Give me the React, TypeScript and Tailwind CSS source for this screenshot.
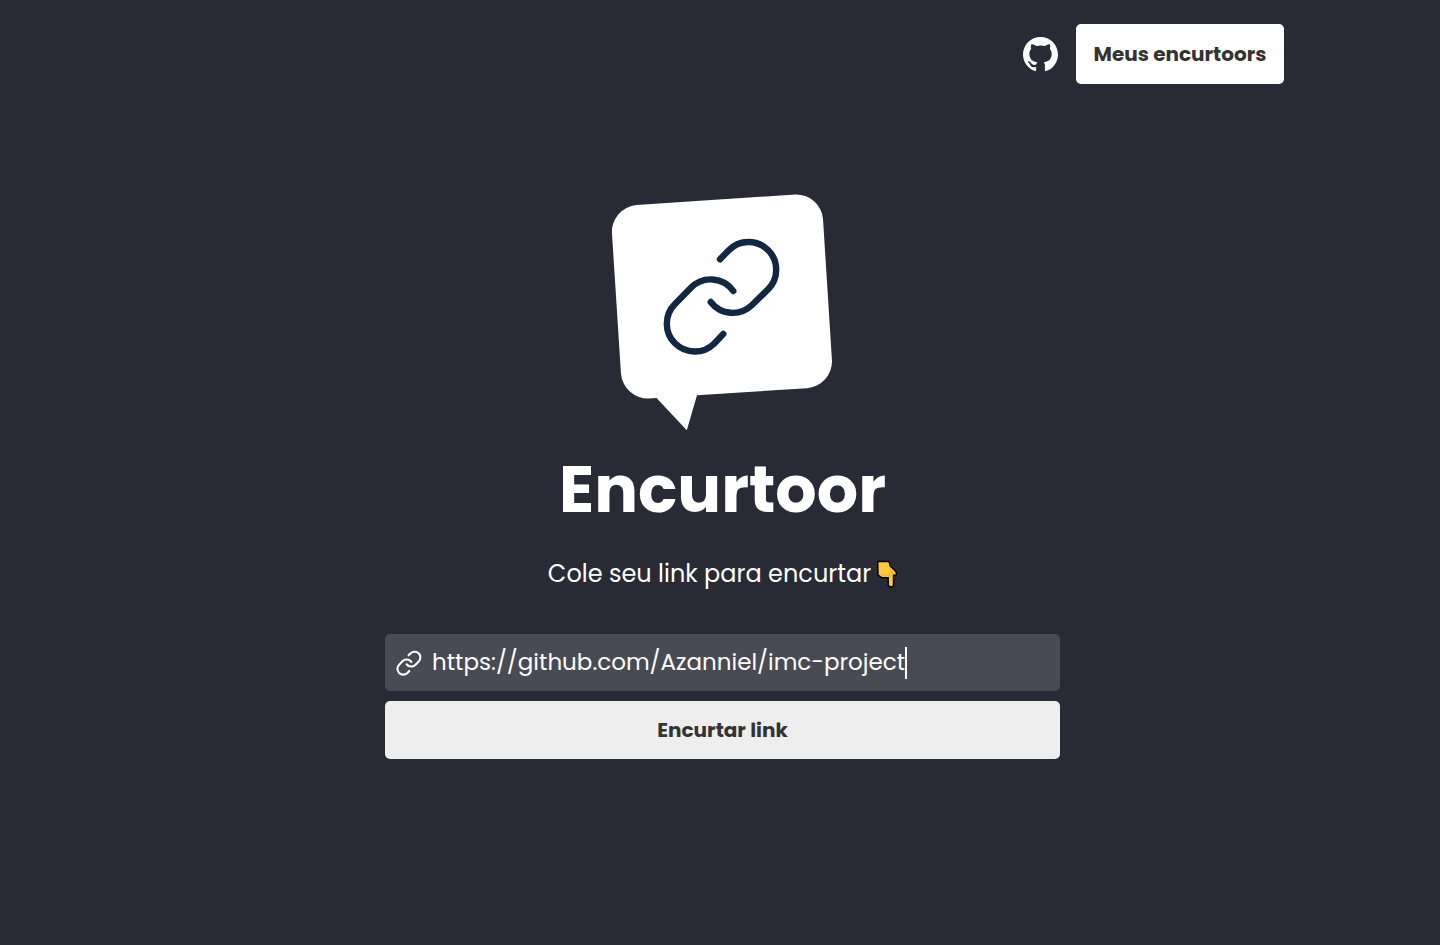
import { useState } from "react";
import { BsGithub } from "react-icons/bs";

function ChainPaths() {
  return (
    <>
      <path d="M720 259.3 728.8 250.2A27.7 27.7 0 0 1 768.2 289.2L752 305A27.7 27.7 0 0 1 710.7 302" />
      <path d="M733.3 291A27.7 27.7 0 0 0 690.7 288L675 304A27.7 27.7 0 0 0 714.3 343.4L723.3 334" />
    </>
  );
}

function BubbleLogo() {
  return (
    <svg viewBox="611 193 223 238" className="h-[238px] w-[223px]" role="img" aria-label="Logo">
      <path
        fill="#fff"
        d="M636.5 205 795.5 194.4A27 27 0 0 1 823 219L832 361A27 27 0 0 1 807 388.2L697 395.3 686.8 430.2 656.5 398 649 398.5A27 27 0 0 1 621 374L612 234A27 27 0 0 1 636.5 205Z"
      />
      <g fill="none" stroke="#132743" strokeWidth="6.4" strokeLinecap="round">
        <ChainPaths />
      </g>
    </svg>
  );
}

function PointDown() {
  return (
    <svg viewBox="1 0 20 28" className="h-7 w-5" aria-hidden="true">
      <path
        d="M2.5 2.2H12.5L13.5 6.5 18 10.5Q20.5 13.5 19.5 14.5L16.8 14.5V25Q15 27.5 13 25V17H6L2.7 14.5Z"
        fill="#ffc83d"
        stroke="#000"
        strokeWidth="3"
        strokeLinejoin="round"
        style={{ paintOrder: "stroke" }}
      />
      <path d="M7 14v2.6M10 14v2.6M13 14v2.6M16.8 14.3 14.6 10.5" stroke="#d9901a" strokeWidth="0.8" fill="none" />
    </svg>
  );
}

export default function App() {
  const [link, setLink] = useState("https://github.com/Azanniel/imc-project");
  return (
    <div className="min-h-screen bg-[#282a36] pl-[5px] font-[Poppins,Inter,sans-serif] text-white">
      <header className="mx-auto flex max-w-[1123px] items-center justify-end gap-[18px] pt-6">
        <a href="#github" aria-label="GitHub">
          <BsGithub className="size-[35px]" />
        </a>
        <button type="button" className="h-[60px] w-[208px] rounded-[5px] bg-white text-xl font-bold text-[#333]">
          Meus encurtoors
        </button>
      </header>

      <main className="mx-auto flex max-w-[675px] flex-col items-center pt-[109px]">
        <BubbleLogo />
        <h1 className="mt-[11px] text-[65px] leading-[96px] font-bold">Encurtoor</h1>
        <p className="mt-[18px] flex items-center gap-1.5 text-2xl leading-9">
          Cole seu link para encurtar
          <PointDown />
        </p>

        <form className="mt-[42px] flex w-full flex-col gap-[10px]" onSubmit={(e) => e.preventDefault()}>
          <label className="flex h-[57px] cursor-text items-center gap-[10px] rounded-[5px] bg-[#494b54] px-[11px]">
            <svg viewBox="660 234 124 124" className="size-[26px] shrink-0" aria-hidden="true">
              <g fill="none" stroke="#fff" strokeWidth="10" strokeLinecap="round">
                <ChainPaths />
              </g>
            </svg>
            <span className="flex min-w-0 items-center">
              <input
                type="text"
                aria-label="Link"
                value={link}
                onChange={(e) => setLink(e.target.value)}
                className="max-w-full [field-sizing:content] bg-transparent text-[23px] caret-transparent outline-none"
              />
              <span className="h-8 w-0.5 shrink-0 bg-white" />
            </span>
          </label>
          <button type="submit" className="h-[58px] rounded-[5px] bg-[#eee] text-xl font-bold text-[#333]">
            Encurtar link
          </button>
        </form>
      </main>
    </div>
  );
}
